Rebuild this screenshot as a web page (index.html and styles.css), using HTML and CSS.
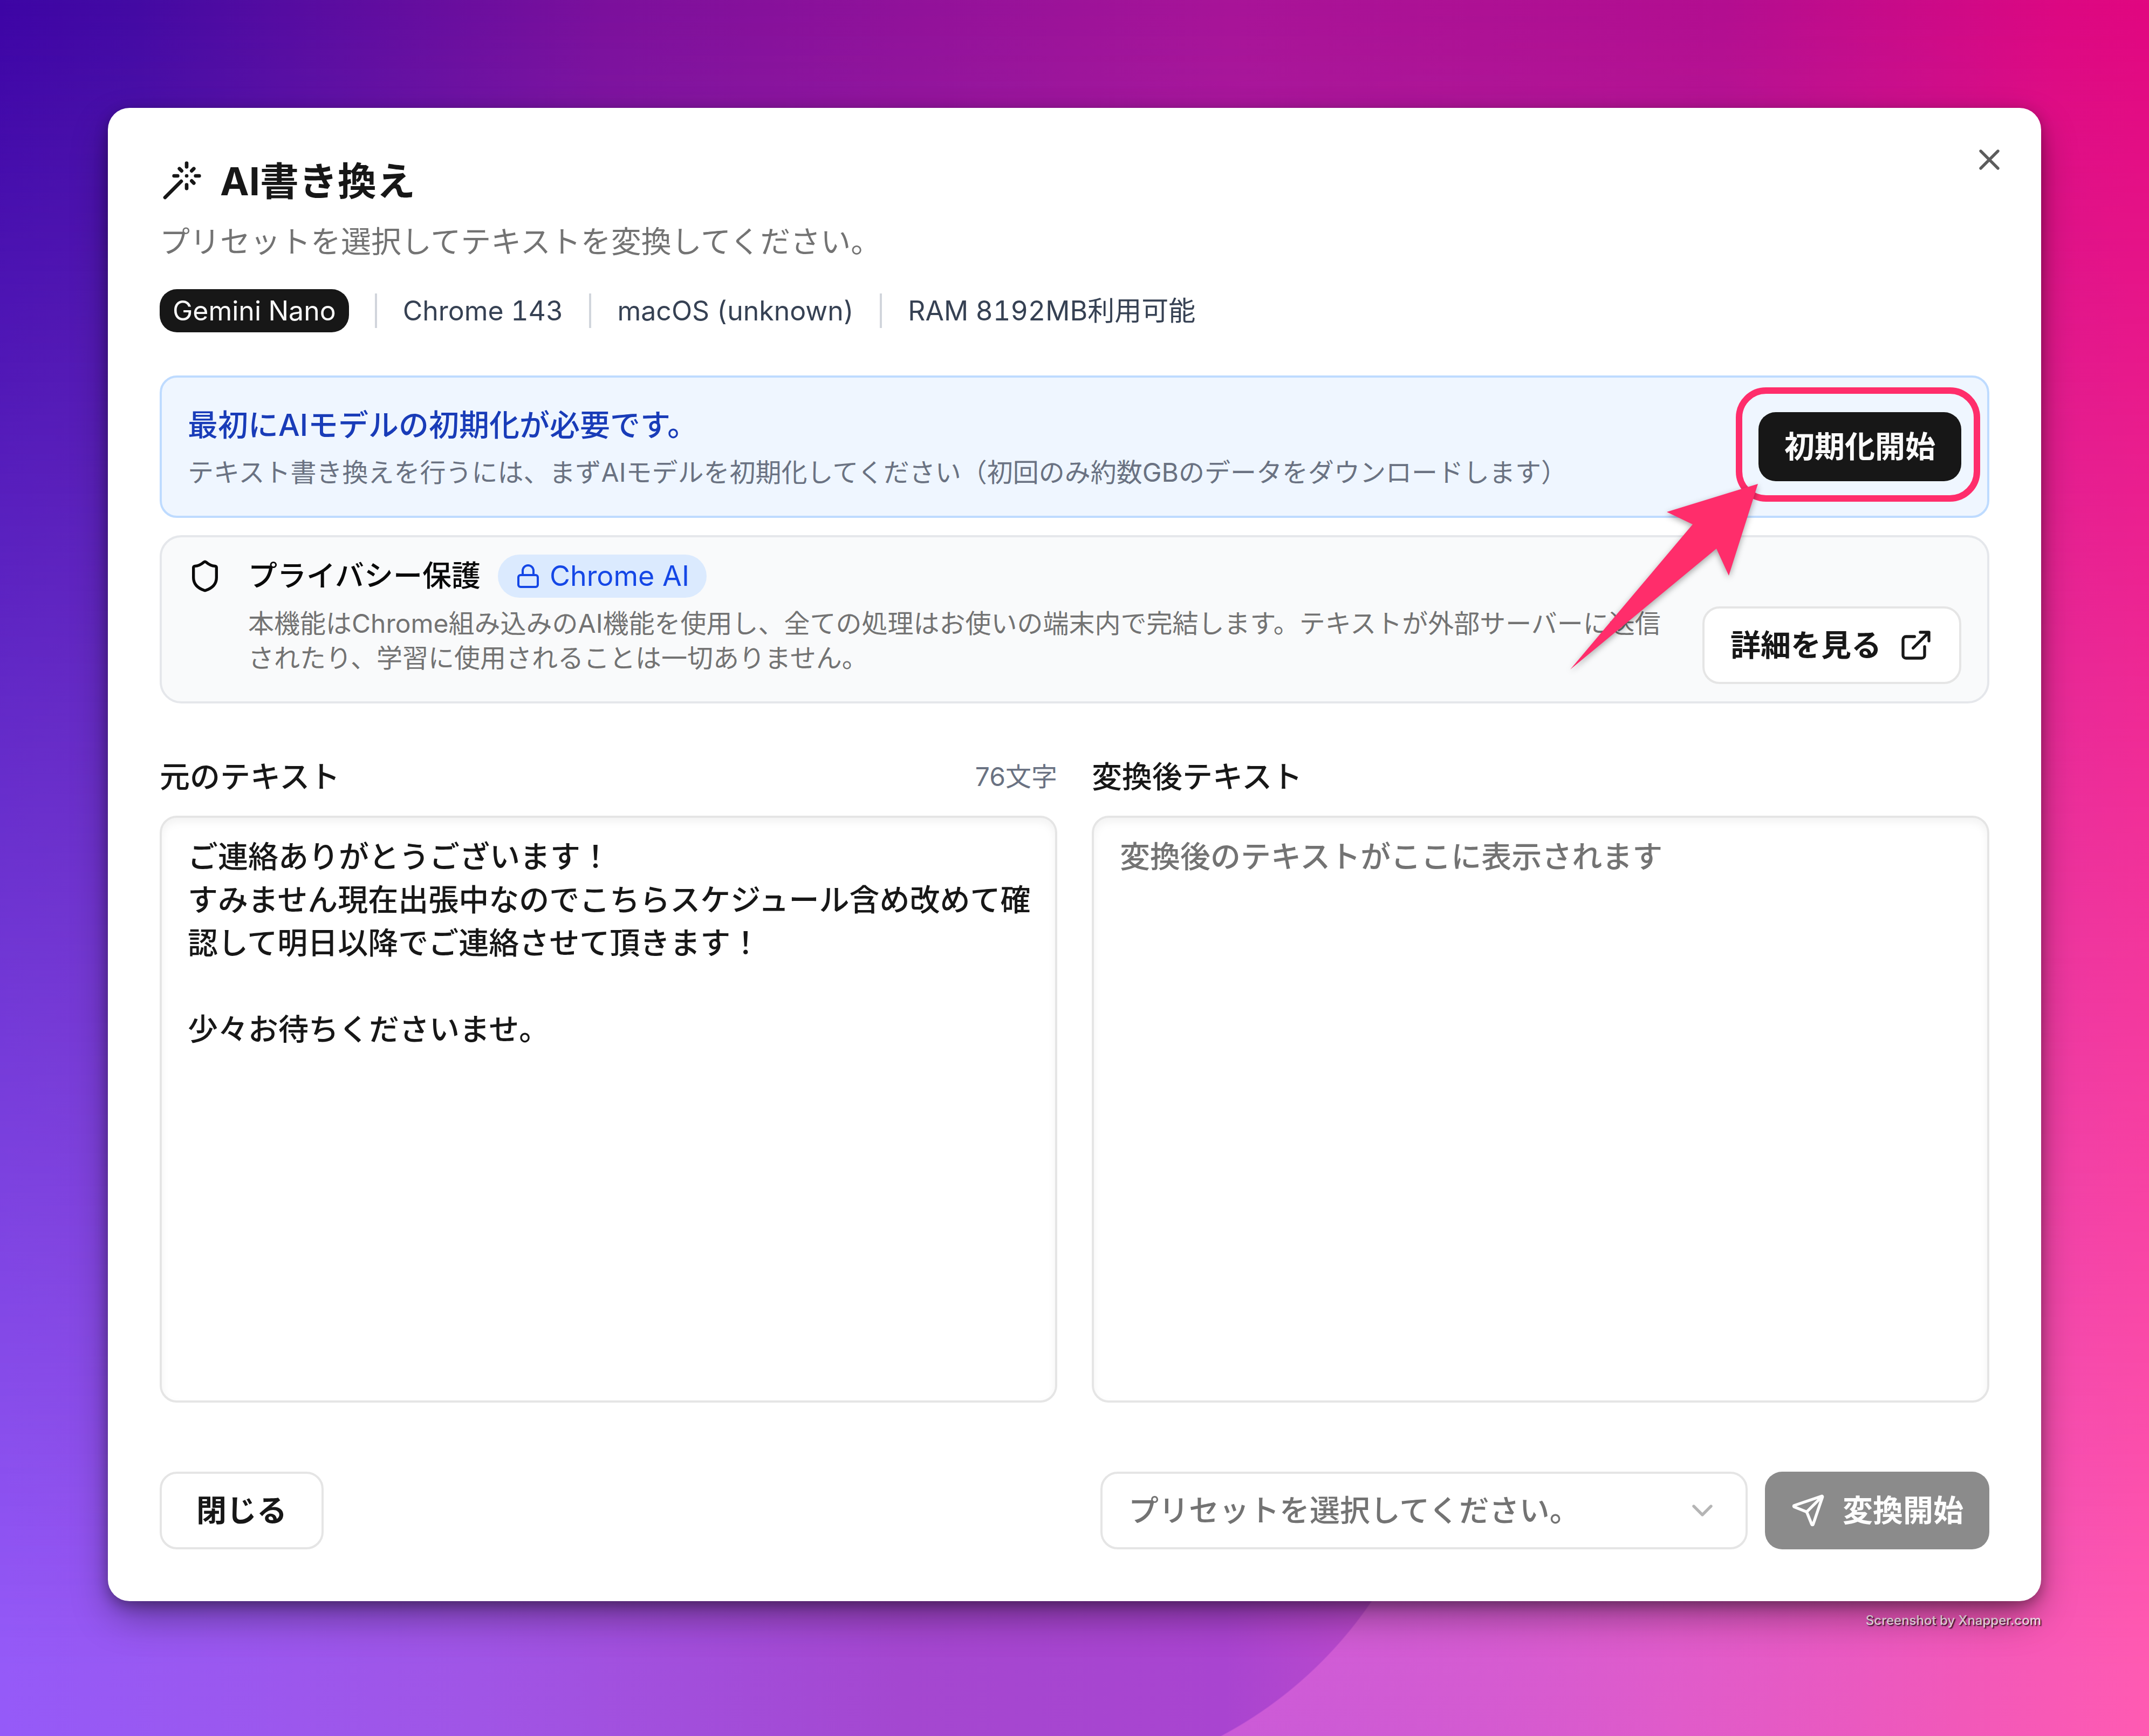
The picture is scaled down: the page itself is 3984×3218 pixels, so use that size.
FILE: index.html
```html
<!DOCTYPE html>
<html lang="ja">
<head>
<meta charset="utf-8">
<meta name="viewport" content="width=device-width, initial-scale=1">
<title>AI書き換え</title>
<link rel="stylesheet" href="styles.css">
</head>
<body class="backdrop">
  <main class="dialog" role="dialog" aria-labelledby="dialog-title">
    <button class="dialog-close" type="button" aria-label="閉じる">
      <svg class="icon" viewBox="0 0 24 24"><path d="M18 6 6 18M6 6l12 12"/></svg>
    </button>

    <header class="dialog-header">
      <h1 class="dialog-title" id="dialog-title">
        <svg class="icon icon-title" viewBox="0 0 24 24"><path d="M15 4V2M15 16v-2M8 9h2M20 9h2M17.8 11.8 19 13M15 9h.01M17.8 6.2 19 5M3 21l9-9M12.2 6.2 11 5"/></svg>
        AI書き換え
      </h1>
      <p class="dialog-subtitle">プリセットを選択してテキストを変換してください。</p>
      <ul class="env">
        <li class="env-badge">Gemini Nano</li>
        <li class="env-item">Chrome 143</li>
        <li class="env-item">macOS (unknown)</li>
        <li class="env-item">RAM 8192MB利用可能</li>
      </ul>
    </header>

    <section class="panels">
      <div class="panel panel-init">
        <div class="panel-text">
          <h2 class="init-title">最初にAIモデルの初期化が必要です。</h2>
          <p class="init-note">テキスト書き換えを行うには、まずAIモデルを初期化してください（初回のみ約数GBのデータをダウンロードします）</p>
        </div>
        <div class="callout">
          <button class="btn btn-dark" type="button">初期化開始</button>
          <svg class="callout-arrow" viewBox="0 0 350 346" aria-hidden="true"><path d="M349 1 180 53l48 23L1 345l271-224 23 50z"/></svg>
        </div>
      </div>

      <div class="panel panel-privacy">
        <svg class="icon privacy-icon" viewBox="0 0 24 24"><path d="M20 13c0 5-3.500 7.500-7.660 8.950a1 1 0 0 1-.67-.01C7.500 20.500 4 18 4 13V6a1 1 0 0 1 1-1c2 0 4.500-1.200 6.240-2.720a1.170 1.170 0 0 1 1.520 0C14.510 3.810 17 5 19 5a1 1 0 0 1 1 1z"/></svg>
        <div class="privacy-body">
          <div class="privacy-head">
            <h2 class="privacy-title">プライバシー保護</h2>
            <span class="chrome-badge">
              <svg class="icon icon-small" viewBox="0 0 24 24"><rect x="3" y="11" width="18" height="11" rx="2"/><path d="M7 11V7a5 5 0 0 1 10 0v4"/></svg>
              Chrome AI
            </span>
          </div>
          <p class="privacy-note">本機能はChrome組み込みのAI機能を使用し、全ての処理はお使いの端末内で完結します。テキストが外部サーバーに送信されたり、学習に使用されることは一切ありません。</p>
        </div>
        <a class="btn btn-outline btn-details" href="#">
          詳細を見る
          <svg class="icon" viewBox="0 0 24 24"><path d="M15 3h6v6M10 14 21 3M18 13v6a2 2 0 0 1-2 2H5a2 2 0 0 1-2-2V8a2 2 0 0 1 2-2h6"/></svg>
        </a>
      </div>
    </section>

    <section class="editors">
      <div class="editor">
        <div class="editor-head">
          <label class="editor-label" for="source">元のテキスト</label>
          <span class="editor-count">76文字</span>
        </div>
        <textarea class="editor-area" id="source">ご連絡ありがとうございます！
すみません現在出張中なのでこちらスケジュール含め改めて確認して明日以降でご連絡させて頂きます！

少々お待ちくださいませ。</textarea>
      </div>
      <div class="editor">
        <div class="editor-head">
          <label class="editor-label" for="result">変換後テキスト</label>
        </div>
        <textarea class="editor-area" id="result" readonly placeholder="変換後のテキストがここに表示されます"></textarea>
      </div>
    </section>

    <footer class="actions">
      <button class="btn btn-outline btn-cancel" type="button">閉じる</button>
      <div class="select-wrap">
        <select class="preset" aria-label="プリセット">
          <option>プリセットを選択してください。</option>
        </select>
        <svg class="icon preset-chevron" viewBox="0 0 24 24"><path d="m6 9 6 6 6-6"/></svg>
      </div>
      <button class="btn btn-dark btn-convert" type="button" disabled>
        <svg class="icon" viewBox="0 0 24 24"><path d="M14.536 21.686a.5.5 0 0 0 .937-.024l6.500-19a.496.496 0 0 0-.635-.635l-19 6.500a.5.5 0 0 0-.024.937l7.930 3.180a2 2 0 0 1 1.112 1.110zM21.854 2.147l-10.940 10.939"/></svg>
        変換開始
      </button>
    </footer>
  </main>
  <p class="credit">Screenshot by Xnapper.com</p>
</body>
</html>
```
FILE: styles.css
```css
* {
  box-sizing: border-box;
  margin: 0;
  padding: 0;
}

:root {
  --ink: #171717;
  --muted: #737373;
  --slate: #6a7282;
  --line: #e5e5e5;
  --accent: #ff2d6b;
  --text: 56px;
  --small: 48px;
}

.backdrop {
  position: relative;
  isolation: isolate;
  min-height: 100vh;
  padding: 200px 200px 0;
  font-family: Inter, "Noto Sans CJK JP", sans-serif;
  font-size: var(--text);
  line-height: 80px;
  color: var(--ink);
  background: linear-gradient(93deg, #3d05a5, #430aa3 6%, #7b109c 27%, #a81498 55%, #b30e90 77%, #dc0882 92%, #e6067e);
}

/* Lower colour row of the wallpaper, faded in from the top */
.backdrop::before {
  content: "";
  position: absolute;
  inset: 0;
  z-index: -2;
  background: linear-gradient(90deg, #955af8, #a055e6 22%, #a447d0 42%, #a944d0 57%, #dd55c4 78%, #ff5ab2);
  mask-image: linear-gradient(180deg, transparent, #000 96%);
}

/* Light area outside the wallpaper's large disc */
.backdrop::after {
  content: "";
  position: absolute;
  right: 0;
  bottom: 0;
  z-index: -1;
  width: 2083px;
  height: 686px;
  background: radial-gradient(circle at 0 0, transparent 775px, rgba(235, 112, 222, 0.5) 777px, rgba(240, 96, 190, 0) 1850px);
}

.icon {
  flex: none;
  width: 64px;
  height: 64px;
  fill: none;
  stroke: currentColor;
  stroke-width: 2;
  stroke-linecap: round;
  stroke-linejoin: round;
}

.icon-title {
  width: 80px;
  height: 80px;
}

.icon-small {
  width: 48px;
  height: 48px;
}

/* Dialog */

.dialog {
  position: relative;
  padding: 96px;
  border-radius: 40px;
  background: #fff;
  box-shadow: 0 32px 72px -8px rgba(0, 0, 0, 0.4), 0 8px 24px rgba(0, 0, 0, 0.3);
}

.dialog-close {
  position: absolute;
  top: 64px;
  right: 64px;
  display: flex;
  border: 0;
  background: none;
  color: #5c5c5c;
}

.dialog-title {
  display: flex;
  align-items: center;
  gap: 32px;
  font-size: 72px;
  font-weight: 700;
  line-height: 80px;
}

.dialog-subtitle {
  margin-top: 32px;
  color: var(--muted);
}

.env {
  display: flex;
  align-items: center;
  gap: 48px;
  margin-top: 48px;
  list-style: none;
  font-size: 50px;
  font-variant-numeric: tabular-nums;
  color: #364153;
}

.env-badge {
  padding: 0 24px;
  border-radius: 32px;
  background: var(--ink);
  color: #fafafa;
}

.env-item {
  padding-left: 48px;
  border-left: 4px solid #d1d5dc;
  line-height: 64px;
}

/* Notice panels */

.panels {
  display: grid;
  gap: 32px;
  margin-top: 80px;
}

.panel {
  display: flex;
  border: 4px solid;
}

.panel-init {
  align-items: center;
  justify-content: space-between;
  padding: 48px;
  border-color: #bedbff;
  border-radius: 32px;
  background: #eff6ff;
}

.init-title {
  font-size: var(--text);
  font-weight: 500;
  color: #193cb8;
}

.init-note {
  margin-top: 16px;
  font-size: var(--small);
  line-height: 64px;
  color: var(--slate);
}

.panel-privacy {
  gap: 48px;
  padding: 32px 48px;
  border-color: #e5e7eb;
  border-radius: 40px;
  background: #f9fafb;
}

.privacy-icon {
  margin-top: 8px;
  color: #0a0a0a;
}

.privacy-body {
  flex: 1;
  padding-bottom: 16px;
}

.privacy-head {
  display: flex;
  align-items: center;
  gap: 32px;
}

.privacy-title {
  font-size: 54px;
  font-weight: 500;
  color: #0a0a0a;
}

.chrome-badge {
  display: flex;
  align-items: center;
  gap: 16px;
  padding: 0 32px;
  border-radius: 40px;
  background: #dbeafe;
  font-size: 52px;
  color: #1447e6;
}

.privacy-note {
  margin-top: 16px;
  font-size: var(--small);
  line-height: 64px;
  color: var(--muted);
}

/* Buttons */

.btn {
  display: flex;
  align-items: center;
  justify-content: center;
  gap: 32px;
  height: 144px;
  padding: 0 48px;
  border: 0;
  border-radius: 32px;
  font: 700 var(--text)/80px Inter, "Noto Sans CJK JP", sans-serif;
  white-space: nowrap;
  text-decoration: none;
}

.btn-dark {
  background: var(--ink);
  color: #fafafa;
}

.btn-outline {
  border: 4px solid var(--line);
  background: #fff;
  color: var(--ink);
}

.btn-details {
  align-self: flex-end;
}

.btn-cancel {
  margin-right: auto;
  padding: 0 64px;
}

.btn-convert {
  background: #8b8b8b;
  color: #fdfdfd;
}

/* Marked-up call to action: ring and arrow lie over the panel */

.callout {
  position: relative;
}

.callout .btn {
  height: 128px;
}

.callout::before {
  content: "";
  position: absolute;
  inset: -46px -35px -38px -42px;
  border: 12px solid var(--accent);
  border-radius: 56px;
  pointer-events: none;
}

.callout-arrow {
  position: absolute;
  top: 132px;
  right: 376px;
  z-index: 1;
  width: 350px;
  height: 346px;
  overflow: visible;
  fill: var(--accent);
  filter: drop-shadow(0 4px 6px rgba(0, 0, 0, 0.35));
  pointer-events: none;
}

/* Source and result */

.editors {
  display: grid;
  grid-template-columns: 1fr 1fr;
  gap: 64px;
  margin-top: 96px;
}

.editor {
  display: grid;
  gap: 32px;
}

.editor-head {
  display: flex;
  align-items: center;
  justify-content: space-between;
}

.editor-label {
  font-weight: 500;
}

.editor-count {
  font-size: var(--small);
  color: var(--slate);
}

.editor-area {
  width: 100%;
  height: 1088px;
  padding: 32px 40px 32px 48px;
  border: 4px solid var(--line);
  border-radius: 32px;
  background: #fff;
  box-shadow: inset 0 8px 16px rgba(0, 0, 0, 0.05);
  color: var(--ink);
  font: inherit;
  font-weight: 500;
  resize: none;
}

.editor-area::placeholder {
  color: var(--muted);
}

/* Footer */

.actions {
  display: flex;
  gap: 32px;
  margin-top: 128px;
}

.select-wrap {
  display: grid;
  align-items: center;
  width: 1200px;
}

.preset {
  grid-area: 1 / 1;
  width: 100%;
  height: 144px;
  padding: 0 48px;
  border: 4px solid var(--line);
  border-radius: 32px;
  background: #fff;
  color: var(--muted);
  font: inherit;
  font-weight: 500;
  appearance: none;
}

.preset-chevron {
  grid-area: 1 / 1;
  justify-self: end;
  margin-right: 52px;
  color: #b5b5b5;
  pointer-events: none;
}

.credit {
  margin-top: 16px;
  font-size: 24px;
  font-weight: 500;
  line-height: 40px;
  text-align: right;
  color: #fde6f5;
  text-shadow: 2px 2px 2px rgba(0, 0, 0, 0.8);
}
```
